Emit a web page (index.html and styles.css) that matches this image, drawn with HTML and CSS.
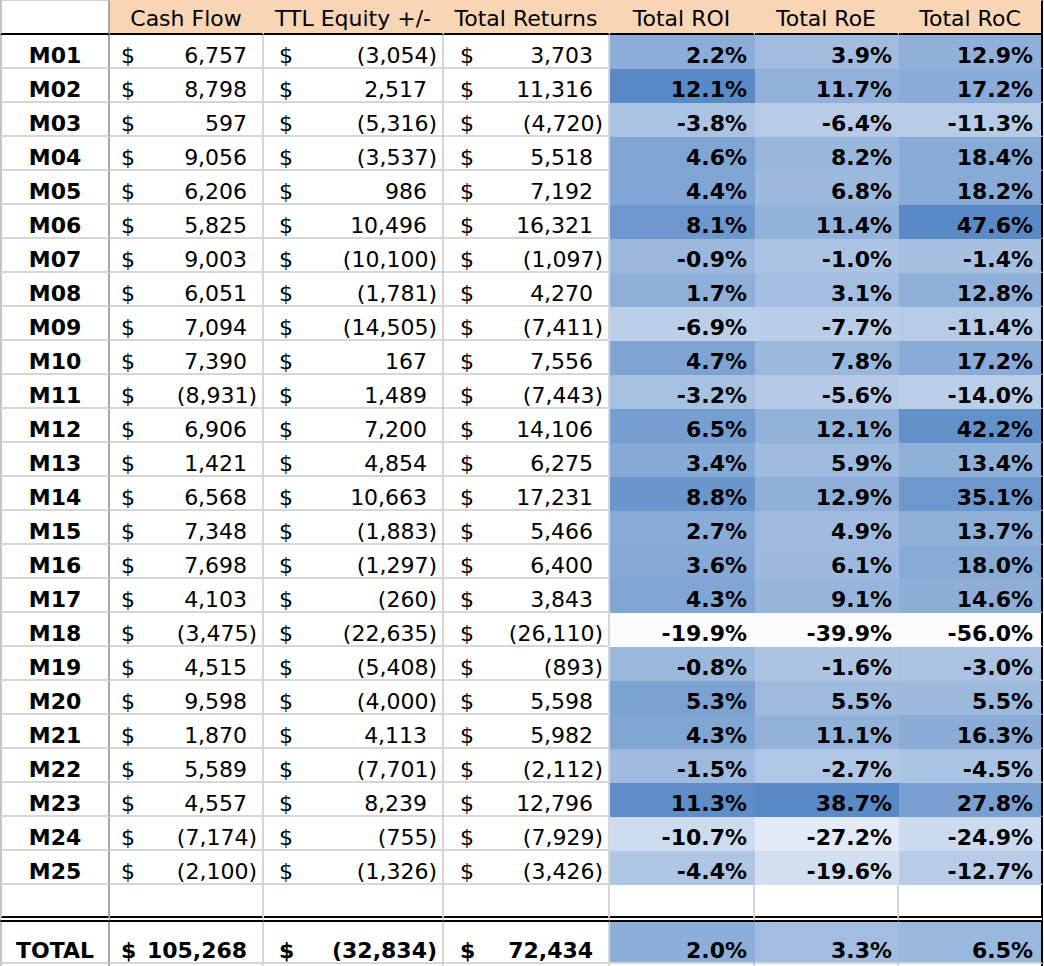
FILE: index.html
```html
<!DOCTYPE html>
<html lang="en">
<head>
<meta charset="utf-8">
<title>Returns by Month</title>
<link rel="stylesheet" href="styles.css">
</head>
<body>
<div class="sheet">
  <div class="row hd">
    <div class="c lab corner"></div>
    <div class="c th">Cash Flow</div>
    <div class="c th">TTL Equity +/-</div>
    <div class="c th">Total Returns</div>
    <div class="c th">Total ROI</div>
    <div class="c th">Total RoE</div>
    <div class="c th end">Total RoC</div>
  </div>

  <div class="row data"><div class="c lab">M01</div><div class="c n cf"><span>$</span><span class="p">6,757</span></div><div class="c n eq"><span>$</span><span>(3,054)</span></div><div class="c n tr"><span>$</span><span class="p">3,703</span></div><div class="c h fill roi">2.2%</div><div class="c h fill roe">3.9%</div><div class="c h fill roc end">12.9%</div></div>
  <div class="row data"><div class="c lab">M02</div><div class="c n cf"><span>$</span><span class="p">8,798</span></div><div class="c n eq"><span>$</span><span class="p">2,517</span></div><div class="c n tr"><span>$</span><span class="p">11,316</span></div><div class="c h fill roi">12.1%</div><div class="c h fill roe">11.7%</div><div class="c h fill roc end">17.2%</div></div>
  <div class="row data"><div class="c lab">M03</div><div class="c n cf"><span>$</span><span class="p">597</span></div><div class="c n eq"><span>$</span><span>(5,316)</span></div><div class="c n tr"><span>$</span><span>(4,720)</span></div><div class="c h fill roi">-3.8%</div><div class="c h fill roe">-6.4%</div><div class="c h fill roc end">-11.3%</div></div>
  <div class="row data"><div class="c lab">M04</div><div class="c n cf"><span>$</span><span class="p">9,056</span></div><div class="c n eq"><span>$</span><span>(3,537)</span></div><div class="c n tr"><span>$</span><span class="p">5,518</span></div><div class="c h fill roi">4.6%</div><div class="c h fill roe">8.2%</div><div class="c h fill roc end">18.4%</div></div>
  <div class="row data"><div class="c lab">M05</div><div class="c n cf"><span>$</span><span class="p">6,206</span></div><div class="c n eq"><span>$</span><span class="p">986</span></div><div class="c n tr"><span>$</span><span class="p">7,192</span></div><div class="c h fill roi">4.4%</div><div class="c h fill roe">6.8%</div><div class="c h fill roc end">18.2%</div></div>
  <div class="row data"><div class="c lab">M06</div><div class="c n cf"><span>$</span><span class="p">5,825</span></div><div class="c n eq"><span>$</span><span class="p">10,496</span></div><div class="c n tr"><span>$</span><span class="p">16,321</span></div><div class="c h fill roi">8.1%</div><div class="c h fill roe">11.4%</div><div class="c h fill roc end">47.6%</div></div>
  <div class="row data"><div class="c lab">M07</div><div class="c n cf"><span>$</span><span class="p">9,003</span></div><div class="c n eq"><span>$</span><span>(10,100)</span></div><div class="c n tr"><span>$</span><span>(1,097)</span></div><div class="c h fill roi">-0.9%</div><div class="c h fill roe">-1.0%</div><div class="c h fill roc end">-1.4%</div></div>
  <div class="row data"><div class="c lab">M08</div><div class="c n cf"><span>$</span><span class="p">6,051</span></div><div class="c n eq"><span>$</span><span>(1,781)</span></div><div class="c n tr"><span>$</span><span class="p">4,270</span></div><div class="c h fill roi">1.7%</div><div class="c h fill roe">3.1%</div><div class="c h fill roc end">12.8%</div></div>
  <div class="row data"><div class="c lab">M09</div><div class="c n cf"><span>$</span><span class="p">7,094</span></div><div class="c n eq"><span>$</span><span>(14,505)</span></div><div class="c n tr"><span>$</span><span>(7,411)</span></div><div class="c h fill roi">-6.9%</div><div class="c h fill roe">-7.7%</div><div class="c h fill roc end">-11.4%</div></div>
  <div class="row data"><div class="c lab">M10</div><div class="c n cf"><span>$</span><span class="p">7,390</span></div><div class="c n eq"><span>$</span><span class="p">167</span></div><div class="c n tr"><span>$</span><span class="p">7,556</span></div><div class="c h fill roi">4.7%</div><div class="c h fill roe">7.8%</div><div class="c h fill roc end">17.2%</div></div>
  <div class="row data"><div class="c lab">M11</div><div class="c n cf"><span>$</span><span>(8,931)</span></div><div class="c n eq"><span>$</span><span class="p">1,489</span></div><div class="c n tr"><span>$</span><span>(7,443)</span></div><div class="c h fill roi">-3.2%</div><div class="c h fill roe">-5.6%</div><div class="c h fill roc end">-14.0%</div></div>
  <div class="row data"><div class="c lab">M12</div><div class="c n cf"><span>$</span><span class="p">6,906</span></div><div class="c n eq"><span>$</span><span class="p">7,200</span></div><div class="c n tr"><span>$</span><span class="p">14,106</span></div><div class="c h fill roi">6.5%</div><div class="c h fill roe">12.1%</div><div class="c h fill roc end">42.2%</div></div>
  <div class="row data"><div class="c lab">M13</div><div class="c n cf"><span>$</span><span class="p">1,421</span></div><div class="c n eq"><span>$</span><span class="p">4,854</span></div><div class="c n tr"><span>$</span><span class="p">6,275</span></div><div class="c h fill roi">3.4%</div><div class="c h fill roe">5.9%</div><div class="c h fill roc end">13.4%</div></div>
  <div class="row data"><div class="c lab">M14</div><div class="c n cf"><span>$</span><span class="p">6,568</span></div><div class="c n eq"><span>$</span><span class="p">10,663</span></div><div class="c n tr"><span>$</span><span class="p">17,231</span></div><div class="c h fill roi">8.8%</div><div class="c h fill roe">12.9%</div><div class="c h fill roc end">35.1%</div></div>
  <div class="row data"><div class="c lab">M15</div><div class="c n cf"><span>$</span><span class="p">7,348</span></div><div class="c n eq"><span>$</span><span>(1,883)</span></div><div class="c n tr"><span>$</span><span class="p">5,466</span></div><div class="c h fill roi">2.7%</div><div class="c h fill roe">4.9%</div><div class="c h fill roc end">13.7%</div></div>
  <div class="row data"><div class="c lab">M16</div><div class="c n cf"><span>$</span><span class="p">7,698</span></div><div class="c n eq"><span>$</span><span>(1,297)</span></div><div class="c n tr"><span>$</span><span class="p">6,400</span></div><div class="c h fill roi">3.6%</div><div class="c h fill roe">6.1%</div><div class="c h fill roc end">18.0%</div></div>
  <div class="row data"><div class="c lab">M17</div><div class="c n cf"><span>$</span><span class="p">4,103</span></div><div class="c n eq"><span>$</span><span>(260)</span></div><div class="c n tr"><span>$</span><span class="p">3,843</span></div><div class="c h fill roi">4.3%</div><div class="c h fill roe">9.1%</div><div class="c h fill roc end">14.6%</div></div>
  <div class="row data"><div class="c lab">M18</div><div class="c n cf"><span>$</span><span>(3,475)</span></div><div class="c n eq"><span>$</span><span>(22,635)</span></div><div class="c n tr"><span>$</span><span>(26,110)</span></div><div class="c h fill roi">-19.9%</div><div class="c h fill roe">-39.9%</div><div class="c h fill roc end">-56.0%</div></div>
  <div class="row data"><div class="c lab">M19</div><div class="c n cf"><span>$</span><span class="p">4,515</span></div><div class="c n eq"><span>$</span><span>(5,408)</span></div><div class="c n tr"><span>$</span><span>(893)</span></div><div class="c h fill roi">-0.8%</div><div class="c h fill roe">-1.6%</div><div class="c h fill roc end">-3.0%</div></div>
  <div class="row data"><div class="c lab">M20</div><div class="c n cf"><span>$</span><span class="p">9,598</span></div><div class="c n eq"><span>$</span><span>(4,000)</span></div><div class="c n tr"><span>$</span><span class="p">5,598</span></div><div class="c h fill roi">5.3%</div><div class="c h fill roe">5.5%</div><div class="c h fill roc end">5.5%</div></div>
  <div class="row data"><div class="c lab">M21</div><div class="c n cf"><span>$</span><span class="p">1,870</span></div><div class="c n eq"><span>$</span><span class="p">4,113</span></div><div class="c n tr"><span>$</span><span class="p">5,982</span></div><div class="c h fill roi">4.3%</div><div class="c h fill roe">11.1%</div><div class="c h fill roc end">16.3%</div></div>
  <div class="row data"><div class="c lab">M22</div><div class="c n cf"><span>$</span><span class="p">5,589</span></div><div class="c n eq"><span>$</span><span>(7,701)</span></div><div class="c n tr"><span>$</span><span>(2,112)</span></div><div class="c h fill roi">-1.5%</div><div class="c h fill roe">-2.7%</div><div class="c h fill roc end">-4.5%</div></div>
  <div class="row data"><div class="c lab">M23</div><div class="c n cf"><span>$</span><span class="p">4,557</span></div><div class="c n eq"><span>$</span><span class="p">8,239</span></div><div class="c n tr"><span>$</span><span class="p">12,796</span></div><div class="c h fill roi">11.3%</div><div class="c h fill roe">38.7%</div><div class="c h fill roc end">27.8%</div></div>
  <div class="row data"><div class="c lab">M24</div><div class="c n cf"><span>$</span><span>(7,174)</span></div><div class="c n eq"><span>$</span><span>(755)</span></div><div class="c n tr"><span>$</span><span>(7,929)</span></div><div class="c h fill roi">-10.7%</div><div class="c h fill roe">-27.2%</div><div class="c h fill roc end">-24.9%</div></div>
  <div class="row data"><div class="c lab">M25</div><div class="c n cf"><span>$</span><span>(2,100)</span></div><div class="c n eq"><span>$</span><span>(1,326)</span></div><div class="c n tr"><span>$</span><span>(3,426)</span></div><div class="c h fill roi">-4.4%</div><div class="c h fill roe">-19.6%</div><div class="c h fill roc end">-12.7%</div></div>

  <div class="row gap"><div class="c lab"></div><div class="c"></div><div class="c"></div><div class="c"></div><div class="c"></div><div class="c"></div><div class="c end"></div></div>

  <div class="row tot"><div class="c lab">TOTAL</div><div class="c n cf"><span>$</span><span class="p">105,268</span></div><div class="c n eq"><span>$</span><span>(32,834)</span></div><div class="c n tr"><span>$</span><span class="p">72,434</span></div><div class="c h fill roi">2.0%</div><div class="c h fill roe">3.3%</div><div class="c h fill roc end">6.5%</div></div>

  <div class="row tail"><div class="c lab"></div><div class="c"></div><div class="c"></div><div class="c"></div><div class="c"></div><div class="c"></div><div class="c end"></div></div>
</div>
<script src="script.js"></script>
</body>
</html>
```

FILE: styles.css
```css
html, body {
  margin: 0;
  padding: 0;
  background: #ffffff;
  overflow: hidden;
}

body {
  font-family: "DejaVu Sans", Verdana, sans-serif;
  font-size: 22px;
  color: #000000;
}

.sheet {
  width: 1043px;
}

.row {
  display: grid;
  grid-template-columns: 110px 154px 180px 166px 145px 144px 144px;
  height: 34px;
}

.c {
  box-sizing: border-box;
  display: flex;
  align-items: flex-end;
  border-right: 2px solid #d6d6d6;
  border-bottom: 2px solid #d6d6d6;
  line-height: 22px;
  padding: 0 5px 0 0;
  white-space: nowrap;
}

.c.end {
  border-right-color: #000000;
}

/* row labels */
.lab {
  justify-content: center;
  font-weight: bold;
  padding: 0;
  border-left: 2px solid #c4c4c4;
  border-right-color: #a8a8a8;
}

/* header */
.hd {
  height: 35px;
}

.hd .c {
  border-top: 1px solid transparent;
  border-bottom: 2px solid #000000;
  justify-content: center;
  padding: 0 0 3px 0;
}

.hd .th {
  background: #f7d5b5;
  border-right-color: transparent;
}

.hd .th.end {
  border-right-color: #000000;
}

.hd .corner {
  border-top-color: #cfcfcf;
  border-right-color: #a8a8a8;
  background: #ffffff;
}

/* accounting numbers */
.n {
  justify-content: space-between;
}

.n.cf { padding-left: 11px; }
.n.eq { padding-left: 15px; }
.n.tr { padding-left: 16px; }

.n .p {
  padding-right: 0.45em;
}

/* heat map */
.h {
  justify-content: flex-end;
  font-weight: bold;
  padding-right: 6px;
  border-right-color: transparent;
  border-bottom-color: transparent;
}

.h.roe { padding-right: 5px; }
.h.roc { padding-right: 8px; }

.h.end {
  border-right-color: #000000;
}

/* blank row above total */
.gap {
  height: 37px;
}

.gap .c {
  border-bottom: 6px double #000000;
}

/* total row */
.tot {
  height: 42px;
  font-weight: bold;
}

.tot .h {
  border-bottom-color: #d6d6d6;
}

.tail {
  height: 20px;
}
```

FILE: script.js
```js
(function () {
  var lo = [252, 252, 255];
  var hi = [90, 138, 198];
  ['roi', 'roe', 'roc'].forEach(function (k) {
    var cells = Array.prototype.slice.call(document.querySelectorAll('.data .' + k));
    var vals = cells.map(function (e) { return parseFloat(e.textContent); });
    var mn = Math.min.apply(null, vals);
    var mx = Math.max.apply(null, vals);
    document.querySelectorAll('.fill.' + k).forEach(function (e) {
      var v = parseFloat(e.textContent);
      var t = (v - mn) / (mx - mn);
      t = Math.max(0, Math.min(1, t));
      var c = lo.map(function (a, i) { return Math.round(a + (hi[i] - a) * t); });
      e.style.backgroundColor = 'rgb(' + c.join(',') + ')';
    });
  });
})();
```
